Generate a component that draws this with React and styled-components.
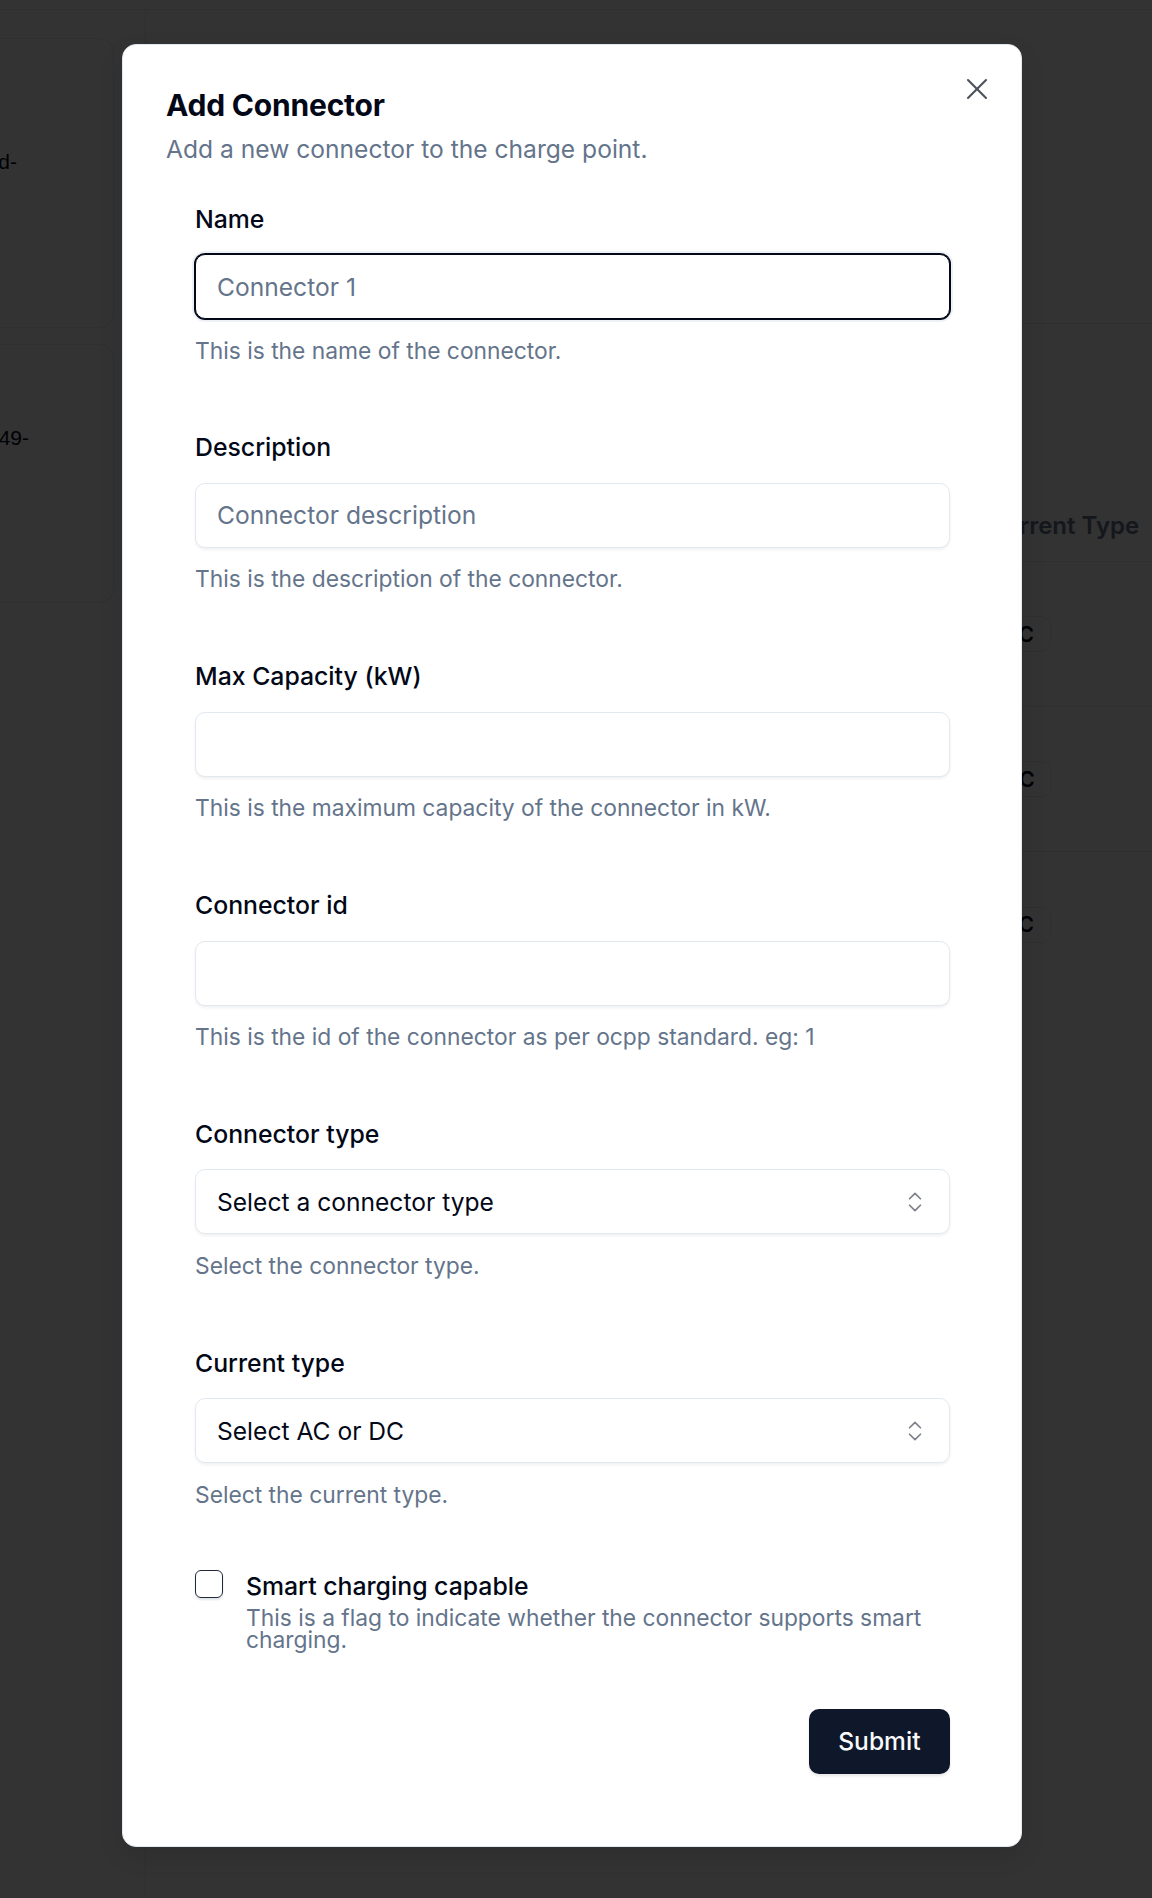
import styled, { createGlobalStyle } from "styled-components";
import { ChevronsUpDown, X } from "lucide-react";

const GlobalStyle = createGlobalStyle`
  html, body {
    margin: 0;
    padding: 0;
  }
  body {
    font-family: Inter, "Noto Sans", "Liberation Sans", sans-serif;
    color: #020817;
  }
  * {
    box-sizing: border-box;
  }
`;

const fields = [
  {
    label: "Name",
    placeholder: "Connector 1",
    help: "This is the name of the connector.",
    focused: true,
  },
  {
    label: "Description",
    placeholder: "Connector description",
    help: "This is the description of the connector.",
  },
  {
    label: "Max Capacity (kW)",
    placeholder: "",
    help: "This is the maximum capacity of the connector in kW.",
  },
  {
    label: "Connector id",
    placeholder: "",
    help: "This is the id of the connector as per ocpp standard. eg: 1",
  },
  {
    label: "Connector type",
    select: "Select a connector type",
    help: "Select the connector type.",
  },
  {
    label: "Current type",
    select: "Select AC or DC",
    help: "Select the current type.",
  },
];

const rows = ["AC", "DC", "AC"];

const App = () => (
  <>
    <GlobalStyle />
    <Page>
      <TopRule />
      <Body>
        <Side>
          <Card $h={290} $pr={96}>
            <CardId $top={109}>8c1f0e2d-</CardId>
          </Card>
          <Card $h={259} $pr={84}>
            <CardId $top={79}>a27e5c49-</CardId>
          </Card>
        </Side>
        <Main>
          <Summary />
          <Table>
            <TableRow $head>
              <Cell />
              <TypeCell>
                <HeadText>Current Type</HeadText>
              </TypeCell>
            </TableRow>
            {rows.map((r, i) => (
              <TableRow key={i} $last={i === rows.length - 1}>
                <Cell />
                <TypeCell>
                  <Badge>{r}</Badge>
                </TypeCell>
              </TableRow>
            ))}
          </Table>
        </Main>
      </Body>

      <Overlay>
        <Dialog>
          <CloseButton aria-label="Close">
            <X size={36} strokeWidth={1.4} />
          </CloseButton>
          <Header>
            <Title>Add Connector</Title>
            <Subtitle>Add a new connector to the charge point.</Subtitle>
          </Header>

          <Form>
            <FieldList>
              {fields.map((f) => (
                <Field key={f.label}>
                  <Label>{f.label}</Label>
                  {f.select ? (
                    <SelectBox>
                      <span>{f.select}</span>
                      <ChevronsUpDown size={26} strokeWidth={1.6} />
                    </SelectBox>
                  ) : (
                    <Input placeholder={f.placeholder} $focused={f.focused} readOnly />
                  )}
                  <Help>{f.help}</Help>
                </Field>
              ))}
            </FieldList>

            <CheckRow>
              <CheckBox />
              <CheckText>
                <Label>Smart charging capable</Label>
                <CheckHelp>
                  This is a flag to indicate whether the connector supports smart
                  charging.
                </CheckHelp>
              </CheckText>
            </CheckRow>

            <Actions>
              <SubmitButton>Submit</SubmitButton>
            </Actions>
          </Form>
        </Dialog>
      </Overlay>
    </Page>
  </>
);

/* background page (dimmed by overlay) */

const Page = styled.div`
  position: relative;
  width: 1152px;
  height: 1898px;
  background: #ffffff;
  overflow: hidden;
  display: flex;
  flex-direction: column;
`;

const TopRule = styled.div`
  height: 10px;
  border-bottom: 1px solid #e2e8f0;
  flex-shrink: 0;
`;

const Body = styled.div`
  flex: 1;
  display: flex;
`;

const Side = styled.div`
  width: 146px;
  flex-shrink: 0;
  border-right: 1px solid #e2e8f0;
  display: flex;
  flex-direction: column;
  align-items: flex-end;
  gap: 16px;
  padding: 28px 31px 0 0;
  overflow: hidden;
`;

const Card = styled.div`
  width: 320px;
  height: ${(p) => p.$h}px;
  flex-shrink: 0;
  border: 1px solid #e2e8f0;
  border-radius: 14px;
  padding-right: ${(p) => p.$pr}px;
`;

const CardId = styled.div`
  padding-top: ${(p) => p.$top}px;
  text-align: right;
  font-family: "Liberation Sans", Arial, sans-serif;
  font-size: 21px;
  line-height: 28px;
  color: #020817;
`;

const Main = styled.div`
  flex: 1;
  display: flex;
  flex-direction: column;
`;

const Summary = styled.div`
  height: 314px;
  border-bottom: 1px solid #e2e8f0;
`;

const Table = styled.div`
  margin-top: 166px;
  display: flex;
  flex-direction: column;
`;

const TableRow = styled.div`
  display: flex;
  height: ${(p) => (p.$head ? 72 : 145)}px;
  border-bottom: ${(p) => (p.$last ? "none" : "1px solid #e2e8f0")};
  align-items: center;
`;

const Cell = styled.div`
  flex: 1;
`;

const TypeCell = styled.div`
  width: 165px;
  flex-shrink: 0;
  display: flex;
  align-items: center;
`;

const HeadText = styled.span`
  font-weight: 600;
  font-size: 24px;
  color: #64748b;
  white-space: nowrap;
`;

const Badge = styled.span`
  display: inline-flex;
  align-items: center;
  height: 36px;
  padding: 0 16px;
  border: 1px solid #e2e8f0;
  border-radius: 10px;
  font-weight: 600;
  font-size: 21px;
  color: #020817;
`;

/* dialog */

const Overlay = styled.div`
  position: absolute;
  inset: 0;
  background: rgba(0, 0, 0, 0.8);
  display: flex;
  justify-content: center;
  align-items: flex-start;
  padding: 44px 8px 0 0;
`;

const Dialog = styled.div`
  position: relative;
  width: 900px;
  background: #ffffff;
  border: 1px solid #e2e8f0;
  border-radius: 14px;
  padding: 45px 43px 44px 43px;
  box-shadow: 0 10px 25px rgba(0, 0, 0, 0.1);
`;

const CloseButton = styled.button`
  position: absolute;
  top: 26px;
  right: 26px;
  width: 36px;
  height: 36px;
  padding: 0;
  border: none;
  background: none;
  color: #020817;
  opacity: 0.7;
  display: flex;
  align-items: center;
  justify-content: center;
`;

const Header = styled.div`
  display: flex;
  flex-direction: column;
  gap: 11.7px;
`;

const Title = styled.h2`
  margin: 0;
  font-size: 30px;
  line-height: 30px;
  font-weight: 700;
  letter-spacing: -0.2px;
  color: #020817;
`;

const Subtitle = styled.p`
  margin: 0;
  font-size: 24.6px;
  line-height: 34px;
  color: #64748b;
`;

const Form = styled.div`
  margin-top: 13px;
  padding: 28px 28px 28px 29px;
  display: flex;
  flex-direction: column;
  gap: 56.3px;
`;

const FieldList = styled.div`
  display: flex;
  flex-direction: column;
  gap: 67.8px;
`;

const Field = styled.div`
  display: flex;
  flex-direction: column;
`;

const Label = styled.label`
  display: block;
  font-size: 24.8px;
  line-height: 24px;
  font-weight: 500;
  color: #020817;
`;

const Input = styled.input`
  margin-top: 23.5px;
  height: 65px;
  width: 100%;
  padding: 0 21px;
  border-radius: 10px;
  border: 1px solid ${(p) => (p.$focused ? "#020817" : "#e2e8f0")};
  box-shadow: ${(p) =>
    p.$focused
      ? "0 0 0 1px #020817, 0 0 0 3px #eef1f6"
      : "0 2px 3px rgba(15, 23, 42, 0.06)"};
  font-family: inherit;
  font-size: 24.6px;
  color: #020817;
  background: #ffffff;
  outline: none;

  &::placeholder {
    color: #64748b;
  }
`;

const SelectBox = styled.div`
  margin-top: 23.5px;
  height: 65px;
  padding: 0 21px;
  border-radius: 10px;
  border: 1px solid #e2e8f0;
  box-shadow: 0 2px 3px rgba(15, 23, 42, 0.06);
  display: flex;
  align-items: center;
  justify-content: space-between;
  font-size: 24.6px;
  color: #020817;

  svg {
    opacity: 0.5;
  }
`;

const Help = styled.p`
  margin: 14.5px 0 0;
  font-size: 22.8px;
  line-height: 34px;
  color: #64748b;
`;

const CheckRow = styled.div`
  margin-top: 2.4px;
  display: flex;
  align-items: flex-start;
  gap: 23px;
`;

const CheckBox = styled.div`
  width: 28px;
  height: 28px;
  flex-shrink: 0;
  border: 1.5px solid #1e293b;
  border-radius: 6px;
  box-shadow: 0 2px 2px rgba(15, 23, 42, 0.12);
`;

const CheckText = styled.div`
  margin-top: 3.7px;
  display: flex;
  flex-direction: column;
  gap: 9px;
`;

const CheckHelp = styled.p`
  margin: 0;
  font-size: 22.8px;
  line-height: 22px;
  color: #64748b;
`;

const Actions = styled.div`
  margin-top: 1.4px;
  display: flex;
  justify-content: flex-end;
`;

const SubmitButton = styled.button`
  height: 65px;
  padding: 0 29.5px;
  border: none;
  border-radius: 10px;
  background: #0f172a;
  color: #f8fafc;
  font-family: inherit;
  font-size: 24.6px;
  font-weight: 500;
  box-shadow: 0 2px 3px rgba(0, 0, 0, 0.1);
`;

export default App;
